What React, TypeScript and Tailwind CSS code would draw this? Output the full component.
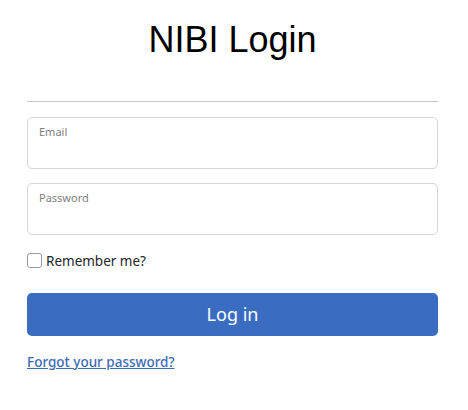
import React from "react";

export default function App() {
  return (
    <div className="w-[468px] h-[410px] bg-white overflow-hidden">
      <div className="ml-[27px] w-[411px] flex flex-col pt-[20px]">
        <h1 className="h-[40px] text-[36px] leading-[40px] text-center text-black font-['Arial','Liberation_Sans',sans-serif]">
          NIBI Login
        </h1>
        <div className="mt-[41px] h-px bg-[#c8c8c8]" />
        <div className="font-['Noto_Sans',sans-serif] flex flex-col">
          <div className="mt-[15px] h-[52px] border border-[#d4d7da] rounded-[5px] px-[11px] pt-[7px]">
            <div className="text-[11px] leading-[14px] text-[#808080]">Email</div>
          </div>
          <div className="mt-[14px] h-[52px] border border-[#d4d7da] rounded-[5px] px-[11px] pt-[7px]">
            <div className="text-[11px] leading-[14px] text-[#808080]">Password</div>
          </div>
          <div className="mt-[18px] flex items-center h-[15px]">
            <div className="w-[15px] h-[15px] border border-[#9a9a9a] rounded-[3px] bg-white" />
            <span className="ml-[4px] text-[13.5px] leading-[15px] text-[#212529] translate-y-[1px]">Remember me?</span>
          </div>
          <button className="mt-[25px] h-[43px] w-full rounded-[5px] bg-[#3a6cc1] text-white text-[18px] leading-[43px]">
            Log in
          </button>
          <a href="#" className="mt-[16px] self-start text-[13.5px] leading-[20px] text-[#3d6bb5] underline font-medium">
            Forgot your password?
          </a>
        </div>
      </div>
    </div>
  );
}
